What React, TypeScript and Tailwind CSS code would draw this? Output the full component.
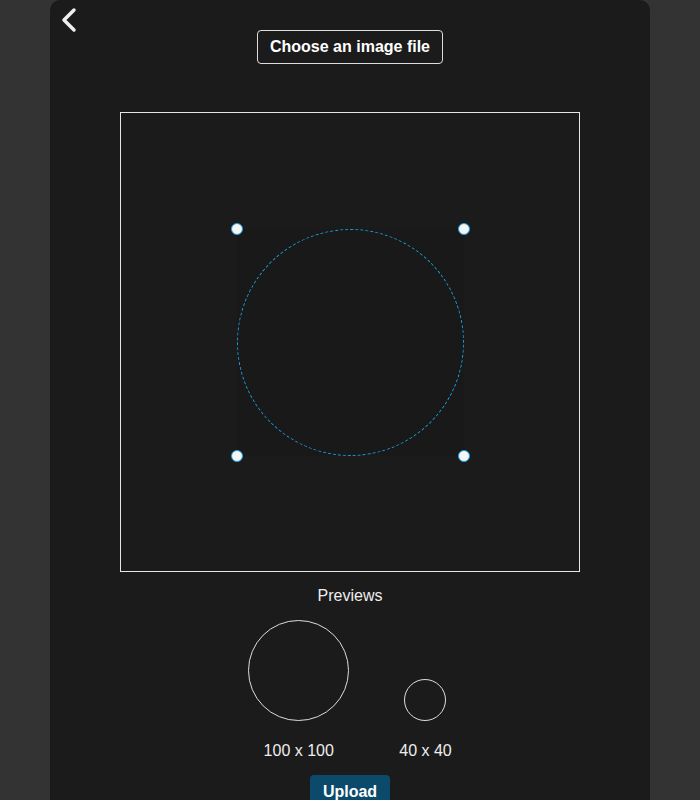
import React from 'react';

export default function App() {
  return (
    <div className="min-h-screen bg-[#333333] flex justify-center" style={{ fontFamily: '"Liberation Sans", Arial, sans-serif' }}>
      <div className="w-[600px] min-h-[800px] bg-[#1b1b1b] rounded-t-[10px] relative flex flex-col items-center">
        <button className="absolute left-[10px] top-[7px] text-[#eeeeee]">
          <svg width="20" height="26" viewBox="0 0 20 26" fill="none" stroke="currentColor" strokeWidth="3.5" strokeLinecap="round" strokeLinejoin="round">
            <path d="M14 3 L4 13 L14 23" />
          </svg>
        </button>

        <button className="mt-[30px] h-[34px] px-[12px] border border-[#dddddd] rounded-[4px] text-white font-bold text-[16px]">
          Choose an image file
        </button>

        <div className="mt-[48px] w-[460px] h-[460px] border border-[#e6e6e6] flex items-center justify-center">
          <div className="relative w-[227px] h-[227px] bg-[#191919]">
            <div className="absolute inset-0 rounded-full border border-dashed border-[#1a9fe0]" />
            <span className="absolute -left-[6px] -top-[6px] w-[12px] h-[12px] rounded-full bg-[#f5f5f5] border-[1.5px] border-[#1a9fe0]" />
            <span className="absolute -right-[6px] -top-[6px] w-[12px] h-[12px] rounded-full bg-[#f5f5f5] border-[1.5px] border-[#1a9fe0]" />
            <span className="absolute -left-[6px] -bottom-[6px] w-[12px] h-[12px] rounded-full bg-[#f5f5f5] border-[1.5px] border-[#1a9fe0]" />
            <span className="absolute -right-[6px] -bottom-[6px] w-[12px] h-[12px] rounded-full bg-[#f5f5f5] border-[1.5px] border-[#1a9fe0]" />
          </div>
        </div>

        <div className="mt-[14px] text-[#eeeeee] text-[16px] leading-[20px]">Previews</div>

        <div className="mt-[14px] flex items-end gap-[50px]">
          <div className="flex flex-col items-center">
            <div className="w-[101px] h-[101px] rounded-full border border-[#dddddd]" />
            <div className="mt-[20px] text-[#eeeeee] text-[16px] leading-[20px]">100 x 100</div>
          </div>
          <div className="flex flex-col items-center">
            <div className="w-[42px] h-[42px] rounded-full border border-[#dddddd]" />
            <div className="mt-[20px] text-[#eeeeee] text-[16px] leading-[20px]">40 x 40</div>
          </div>
        </div>

        <button className="mt-[14px] w-[80px] h-[34px] bg-[#0b4a6b] rounded-[4px] text-white font-bold text-[16px]">
          Upload
        </button>
      </div>
    </div>
  );
}
